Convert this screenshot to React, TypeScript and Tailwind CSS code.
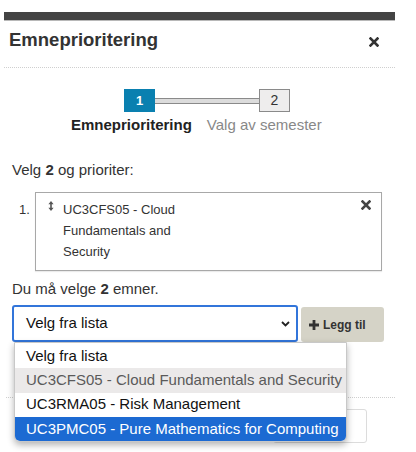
import React from "react";

const options = [
	{ label: "Velg fra lista", tone: "plain" },
	{ label: "UC3CFS05 - Cloud Fundamentals and Security", tone: "taken" },
	{ label: "UC3RMA05 - Risk Management", tone: "plain" },
	{ label: "UC3PMC05 - Pure Mathematics for Computing", tone: "active" },
];

function CloseIcon({ size, color }: { size: number; color: string }) {
	return (
		<svg width={size} height={size} viewBox="0 0 10 10">
			<path d="M1.5 1.5 L8.5 8.5 M8.5 1.5 L1.5 8.5" stroke={color} strokeWidth="2.6" strokeLinecap="square" />
		</svg>
	);
}

function Stepper() {
	return (
		<div className="mt-[21px]">
			{/* Step boxes */}
			<div className="flex items-center ml-[120px]">
				<div className="w-[31px] h-[23px] bg-[#0a80b0] text-white text-[13px] font-bold flex items-center justify-center">1</div>
				<div className="w-[104px] h-[6px] border-y border-[#8a8a8a] bg-[#dcdcdc]" />
				<div className="w-[31px] h-[23px] border border-[#8a8a8a] bg-[#eeeded] text-[#333] text-[14px] flex items-center justify-center">2</div>
			</div>

			{/* Step labels */}
			<div className="flex gap-[15px] ml-[67px] mt-[3.5px] text-[15px] leading-[18px]">
				<span className="font-bold text-[#222]">Emneprioritering</span>
				<span className="text-[#888]">Valg av semester</span>
			</div>
		</div>
	);
}

function PriorityItem() {
	return (
		<div className="flex mt-[13.5px]">
			<span className="ml-[7px] w-[16px] text-[13px] leading-[21px] pt-[7px] text-[#333]">1.</span>
			<div className="w-[347px] h-[79px] border border-[#a8a8a8] shadow-[0_1px_1px_rgba(0,0,0,0.08)] flex pt-[6px]">
				<svg width="6" height="10" viewBox="0 0 6 10" className="ml-[12px] mt-[2px] shrink-0">
					<path d="M3 0 L5.6 3.2 H3.8 V6.8 H5.6 L3 10 L0.4 6.8 H2.2 V3.2 H0.4 Z" fill="#555" />
				</svg>
				<div className="ml-[9px] w-[130px] text-[13px] leading-[21px] text-[#333]">
					UC3CFS05 - Cloud Fundamentals and Security
				</div>
				<div className="ml-auto mr-[10px] mt-[1px]">
					<CloseIcon size={10} color="#444" />
				</div>
			</div>
		</div>
	);
}

function Dropdown() {
	return (
		<div className="absolute left-[14px] top-[342px] w-[333px] pt-[1px] bg-white border border-[#c8c8c8] rounded-b-[6px] overflow-hidden shadow-[0_3px_7px_rgba(0,0,0,0.3)]">
			{options.map((opt, idx) => (
				<div
					key={idx}
					className={
						opt.tone === "active"
							? "h-[24.25px] pl-[11px] flex items-center text-[15px] whitespace-nowrap bg-[#1c6ad2] text-white"
							: opt.tone === "taken"
								? "h-[24.25px] pl-[11px] flex items-center text-[15px] whitespace-nowrap bg-[#ebe9e9] text-[#5a5a5a]"
								: "h-[24.25px] pl-[11px] flex items-center text-[15px] whitespace-nowrap text-[#111]"
					}>
					{opt.label}
				</div>
			))}
		</div>
	);
}

export default function App() {
	return (
		<div className="relative w-[416px] h-[452px] overflow-hidden bg-white font-['Liberation_Sans',Arial,sans-serif]">
			<div className="ml-[4px] w-[391px] pt-[12px]">
				{/* Top bar */}
				<div className="h-[9px] bg-[#444] border-b border-[#b8b8b8]" />

				{/* Header */}
				<div className="flex items-start justify-between h-[47px] border-b border-dotted border-[#cfcfcf] pl-[5px] pr-[16px]">
					<h1 className="pt-[7.5px] text-[18.5px] leading-[22px] font-bold text-[#333]">Emneprioritering</h1>
					<button className="mt-[16px]">
						<CloseIcon size={10} color="#333" />
					</button>
				</div>

				<Stepper />

				<div className="px-[8px]">
					<p className="mt-[27px] text-[15px] leading-[18px] text-[#333]">
						Velg <b>2</b> og prioriter:
					</p>

					<PriorityItem />

					<p className="mt-[9px] text-[15px] leading-[18px] text-[#333]">
						Du må velge <b>2</b> emner.
					</p>

					{/* Select + add */}
					<div className="flex items-start mt-[7px]">
						<div className="w-[286px] h-[37px] border-2 border-[#3275da] rounded-[3px] flex items-center justify-between pl-[12px] pr-[6px] text-[15px] text-[#111]">
							<span>Velg fra lista</span>
							<svg width="9" height="6" viewBox="0 0 9 6">
								<path d="M1 1 L4.5 4.5 L8 1" stroke="#222" strokeWidth="1.8" fill="none" />
							</svg>
						</div>
						<button className="ml-[3px] mt-[2px] w-[83px] h-[35px] rounded-[3px] bg-[#d5d3c7] flex items-center pl-[8px] gap-[4px] text-[12px] font-bold text-[#333]">
							<svg width="10" height="10" viewBox="0 0 10 10">
								<path d="M3.6 0 H6.4 V3.6 H10 V6.4 H6.4 V10 H3.6 V6.4 H0 V3.6 H3.6 Z" fill="#333" />
							</svg>
							Legg til
						</button>
					</div>
				</div>

				{/* Footer (under the open list) */}
				<div className="mt-[55px] border-t border-dotted border-[#cfcfcf] ml-[2px]">
					<button className="ml-[267px] mt-[11px] w-[94px] h-[34px] rounded-[3px] border border-[#dcdcdc] bg-white" />
				</div>
			</div>

			<Dropdown />
		</div>
	);
}
